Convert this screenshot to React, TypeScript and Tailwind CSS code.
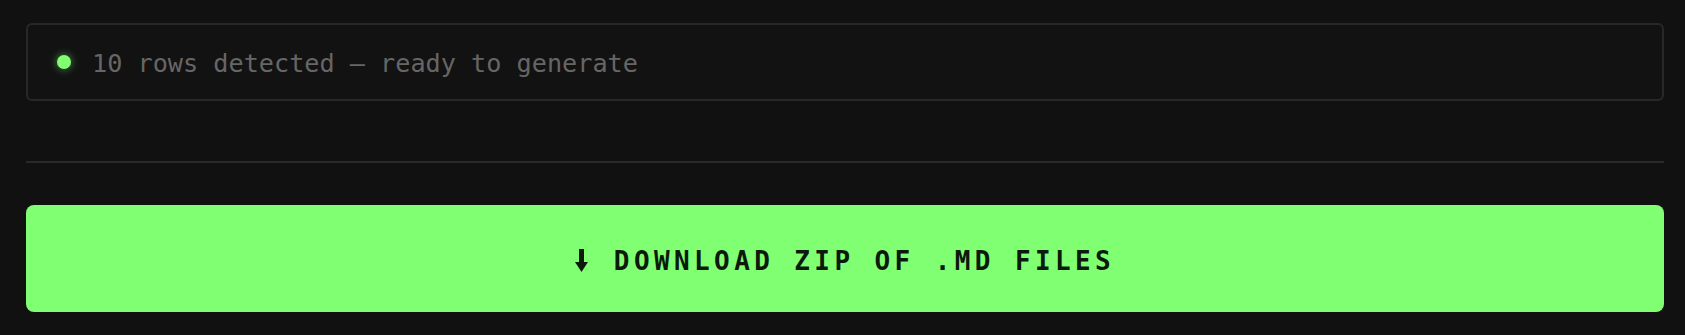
// App.tsx
// ================================================================
// EXPORT PANEL — status line, divider, download button
// ================================================================

import React from "react";

const mono = "font-['DejaVu_Sans_Mono','Liberation_Mono',monospace]";

function DownArrow() {
  // heavy stem + filled head, same as the ⬇ glyph in the reference
  return (
    <svg width="13" height="23" viewBox="0 0 13 23" aria-hidden="true">
      <rect x="4" y="0" width="5" height="14" fill="#0b1a0a" />
      <path d="M0 13 L13 13 L6.5 23 Z" fill="#0b1a0a" />
    </svg>
  );
}

export default function App() {
  return (
    <div className={`min-h-[335px] bg-[#111111] pl-[26px] pr-[21px] pt-[23px] ${mono}`}>
      {/* ── Status box ─────────────────────────────────────── */}
      <div className="flex h-[78px] items-center rounded-[6px] border-2 border-[#282828] bg-[#121212] pl-[29px]">
        <span className="h-[14px] w-[14px] shrink-0 rounded-full bg-[#80ff72] shadow-[0_0_8px_rgba(128,255,114,0.55)]" />
        <span className="ml-[21px] pt-[4px] text-[25.2px] leading-none text-[#666666]">
          10 rows detected — ready to generate
        </span>
      </div>

      {/* ── Divider ────────────────────────────────────────── */}
      <div className="mt-[60px] h-[2px] bg-[#2a2a2a]" />

      {/* ── Download button ────────────────────────────────── */}
      <button className="mt-[42px] flex h-[107px] w-full items-center justify-center gap-[26px] rounded-[8px] bg-[#80ff72] pt-[4px]">
        <DownArrow />
        <span className="text-[26px] font-bold leading-none tracking-[4.4px] text-[#0b1a0a]">
          DOWNLOAD ZIP OF .MD FILES
        </span>
      </button>
    </div>
  );
}
